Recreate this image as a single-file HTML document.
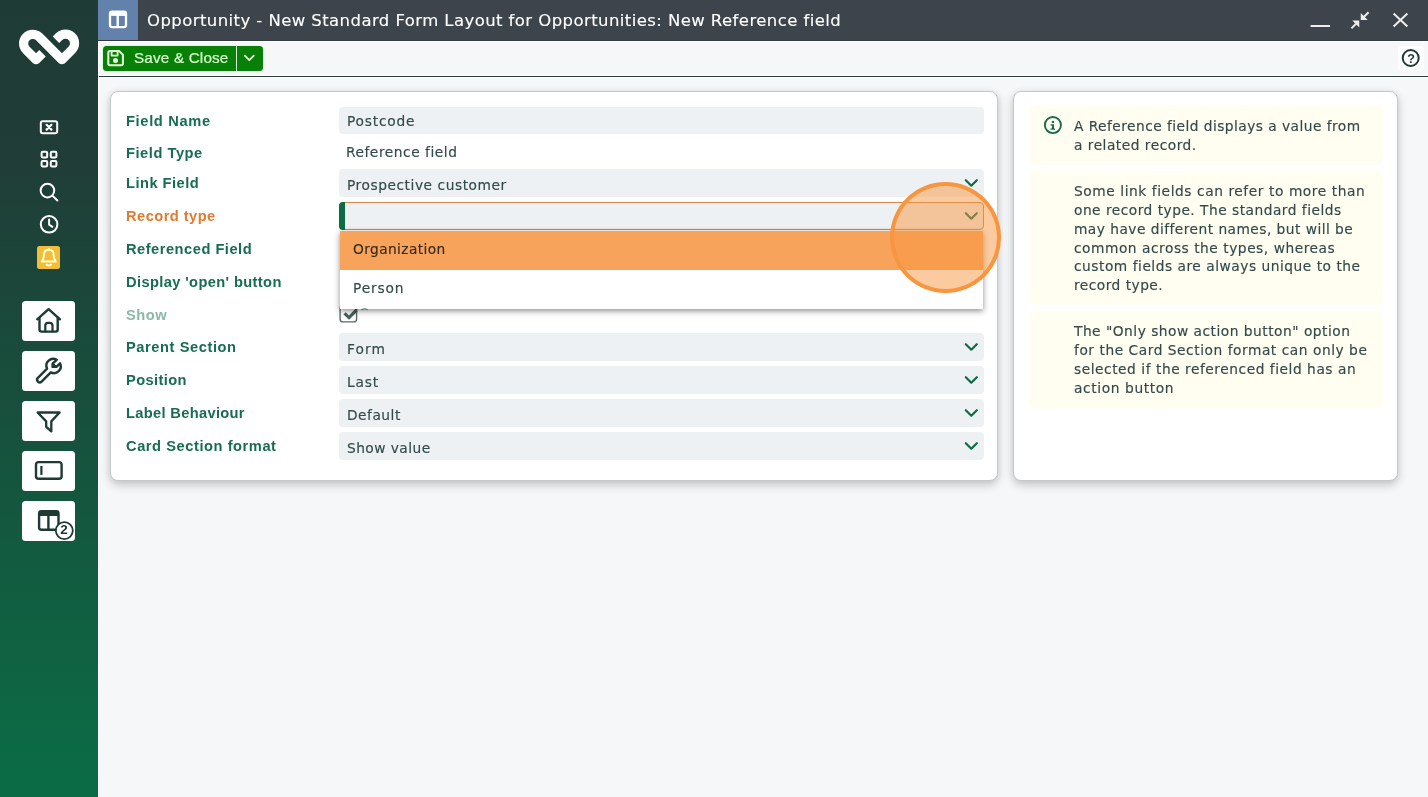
<!DOCTYPE html>
<html lang="en">
<head>
<meta charset="utf-8">
<title>Opportunity - New Standard Form Layout for Opportunities: New Reference field</title>
<style>
*{box-sizing:border-box;margin:0;padding:0}
html,body{width:1428px;height:797px;overflow:hidden;background:#f5f7f9}
#edge{position:absolute;left:98px;top:41px;width:1px;height:756px;background:#fff}
body{font-family:"DejaVu Sans","Liberation Sans",sans-serif;font-size:13.7px;color:#324b4a;position:relative}
.t{position:absolute;white-space:pre;line-height:20px;height:20px;will-change:transform}
.ttl{font-weight:normal;font-size:16px;color:#fff;line-height:24px;height:24px;transform:scaleX(1.03);transform-origin:0 0;-webkit-text-stroke:.12px}
.sv{font-family:"Liberation Sans",sans-serif;font-size:15px;color:#dcffd0;transform:scaleX(1.02);transform-origin:0 0;-webkit-text-stroke:.2px}
.abs{position:absolute}
svg{display:block;position:absolute;overflow:visible}

/* sidebar */
#side{position:absolute;left:0;top:0;width:98px;height:797px;background:linear-gradient(180deg,#1f3b35 0%,#1f3e37 22%,#0b6b45 97%,#0b6b45 100%)}
#badge{will-change:transform;position:absolute;left:54.1px;top:521.3px;width:20px;height:18px;line-height:18px;text-align:center;font-family:"Liberation Sans",sans-serif;font-weight:bold;font-size:13.5px;letter-spacing:0;color:#1d3a35}

/* title bar */
#title{position:absolute;left:98px;top:0;width:1330px;height:41px;background:#3e444b;border-bottom:1px solid #353b42}
#tab{position:absolute;left:0;top:0;width:40px;height:40px;background:#6282ab}

/* toolbar */
#bar{position:absolute;left:98px;top:41px;width:1330px;height:37px;background:#f5f7f9;border-top:1px solid #fff;border-bottom:1px solid #fff}
#bar:after{content:"";position:absolute;left:0;top:33px;width:1330px;height:1px;background:#fff;border-bottom:1px solid #2c3a38}
#save{position:absolute;left:5px;top:4px;box-shadow:0 0 0 1px #ddf9dd;width:133px;height:25px;background:#088008;border-radius:3.5px 0 0 3.5px;color:#d6ffc6;font-family:"Liberation Sans",sans-serif;font-size:15.5px;letter-spacing:0;line-height:25px;white-space:nowrap}
#savedd{position:absolute;left:139px;top:4px;box-shadow:0 0 0 1px #ddf9dd;width:26px;height:25px;background:#088008;border-radius:0 3.5px 3.5px 0}
#q{will-change:transform;position:absolute;left:1302.7px;top:7px;width:20px;height:20px;line-height:20px;text-align:center;font-family:"Liberation Sans",sans-serif;font-weight:bold;font-size:12.5px;letter-spacing:0;color:#1d3a35}
#help{position:absolute;left:1300px;top:4px;width:26px;height:25px;background:#fff;border-radius:4px}

/* cards */
.card{position:absolute;background:#fff;border:1px solid #c6c8ca;border-radius:8px;box-shadow:0 4px 10px rgba(0,0,0,.2),0 0 6px rgba(0,0,0,.05)}
#c1{left:110px;top:91px;width:888px;height:390px}
#c2{left:1013px;top:91px;width:385px;height:390px}

.lbl{font-family:"Liberation Sans",sans-serif;font-weight:bold;font-size:14.1px;color:#176d4f;transform:scaleX(1.04);transform-origin:0 0}
.inp{position:absolute;left:339px;width:645px;height:27px;background:#eef1f4;border-radius:4px}
.val{font-size:13.3px;transform:scaleX(1.035);transform-origin:0 0;-webkit-text-stroke:.15px}
.chev{left:964px;width:14px;height:8px}

/* dropdown */
#rt{position:absolute;left:339px;top:202px;width:645px;height:28px;background:#eef1f4;border:1px solid #cf8a4c;border-radius:4px;box-shadow:inset 0 0 0 1px #fbeadb}
#rt i{position:absolute;left:-1px;top:-1px;width:6px;height:28px;background:#0d6b45;border-radius:4px 0 0 4px}
#dd{position:absolute;left:340px;top:231px;width:643px;height:78px;background:#fff;box-shadow:0 2px 6px rgba(0,0,0,.45)}
#dd .o{position:absolute;left:0;width:643px}
#dd .o1{top:0;height:38.6px;background:#f8a35c}
#dd .o2{top:38.6px;height:39.4px}
#ring{position:absolute;left:890.2px;top:182.2px;width:110.8px;height:110.6px;border-radius:50%;border:4px solid #f8963f;background:rgba(248,150,64,.5)}

/* notes */
.note{position:absolute;left:1030px;width:351.5px;background:#fffef1;border-radius:5px;box-shadow:0 0 2px 1px #fffef1}
</style>
</head>
<body>

<nav id="side">
  <svg style="left:0;top:0" width="98" height="797" viewBox="0 0 98 797" fill="none" stroke-linecap="round" stroke-linejoin="round">
    <!-- logo -->
    <path d="M42.49 52.49 L36.12 58.85 L26.34 49.06 A9 9 0 0 1 39.06 36.34 L61.58 58.85 L71.56 48.86 A9 9 0 0 0 58.84 36.14 L55.7 39.3" stroke="#fff" stroke-width="9" stroke-linecap="butt" transform="translate(49.05 46.9) scale(1.018) translate(-48.9 -46.3)"/>
    <!-- close window -->
    <g stroke="#fff" stroke-width="2">
      <rect x="40.8" y="121.2" width="16.4" height="12" rx="2"/>
      <path d="M46.6 124.8 L51.4 129.6 M51.4 124.8 L46.6 129.6" stroke-width="2.2"/>
      <!-- grid -->
      <rect x="41.6" y="151.8" width="5.6" height="5.6" rx="1.2"/>
      <rect x="50.8" y="151.8" width="5.6" height="5.6" rx="1.2"/>
      <rect x="41.6" y="160.9" width="5.6" height="5.6" rx="1.2"/>
      <rect x="50.8" y="160.9" width="5.6" height="5.6" rx="1.2"/>
      <!-- search -->
      <circle cx="47.45" cy="190.6" r="6.8"/>
      <path d="M52.4 195.6 L57.4 200.5"/>
      <!-- clock -->
      <circle cx="49.1" cy="224.3" r="8.3"/>
      <path d="M49.1 219.6 L49.1 224.6 L52.4 226.8"/>
    </g>
    <!-- bell -->
    <rect x="37" y="246" width="23" height="23" rx="2.5" fill="#f3bd37"/>
    <g stroke="#ffffd0" stroke-width="2">
      <path d="M48.8 248.9 L48.8 249.8 M48.8 249.8 C45.4 249.8 43.9 252.4 43.9 255.2 C43.9 258.6 43 260.2 41.8 261.6 L55.8 261.6 C54.6 260.2 53.7 258.6 53.7 255.2 C53.7 252.4 52.2 249.8 48.8 249.8 Z"/>
      <path d="M46.6 264.6 Q48.8 266.2 51 264.6"/>
    </g>
    <!-- nav buttons -->
    <g fill="#fff">
      <rect x="22" y="301" width="53" height="40" rx="3.5"/>
      <rect x="22" y="351" width="53" height="40" rx="3.5"/>
      <rect x="22" y="401" width="53" height="40" rx="3.5"/>
      <rect x="22" y="451" width="53" height="40" rx="3.5"/>
      <rect x="22" y="501" width="53" height="40" rx="3.5"/>
    </g>
    <g stroke="#1d3a35" stroke-width="2.4">
      <!-- home -->
      <path d="M37.2 319.3 L48.6 309.2 L60 319.3"/>
      <path d="M39.5 318 L39.5 329.6 Q39.5 331.6 41.5 331.6 L55.7 331.6 Q57.7 331.6 57.7 329.6 L57.7 318"/>
      <path d="M45.3 331.4 L45.3 325.6 Q45.3 322.9 48 322.9 L49.8 322.9 Q52.5 322.9 52.5 325.6 L52.5 331.4" stroke-width="2.2"/>
      <!-- wrench -->
      <path d="M56.7 359.9 A6.8 6.8 0 0 0 47.1 368.7 L37.9 377.9 A2.55 2.55 0 0 0 41.6 381.6 L50.8 372.4 A6.8 6.8 0 0 0 60 363.3 L56.4 366.9 L52.6 366.9 L52.6 363.6 Z"/>
      <path d="M52.6 363.2 L52.6 366.9 L56.6 366.9 Z" fill="#1d3a35" stroke-width="1"/>
      <!-- filter -->
      <path d="M37.6 412.5 L59.6 412.5 L51.3 421.4 L51.3 431.4 L46.2 426.8 L46.2 421.4 Z" stroke-width="2.3"/>
      <!-- input -->
      <rect x="36" y="462.1" width="25.6" height="16.7" rx="2.6"/>
      <path d="M41.4 466 L41.4 474.9" stroke-width="2.2" stroke-linecap="butt"/>
      <!-- table columns -->
      <rect x="39.1" y="511.1" width="19.4" height="18.6" rx="2.2"/>
      <path d="M39.1 513.8 L58.5 513.8" stroke-width="4.4" stroke-linecap="butt"/>
      <path d="M48.4 515 L48.4 529.6" stroke-linecap="butt"/>
      <circle cx="64.3" cy="530.6" r="8.5" fill="#fff" stroke-width="1.8"/>
    </g>
  </svg>
  <div id="badge">2</div>
</nav>

<div id="title">
  <div id="tab"></div>
  <svg style="left:0;top:0" width="1330" height="40" viewBox="98 0 1330 40" fill="none" stroke-linecap="round" stroke-linejoin="round">
    <rect x="110" y="11.6" width="16" height="15.5" rx="2" stroke="#fff" stroke-width="2.3"/>
    <path d="M110 13.6 L126 13.6" stroke="#fff" stroke-width="4.6" stroke-linecap="butt"/>
    <path d="M117.7 15 L117.7 27" stroke="#fff" stroke-width="2.4" stroke-linecap="butt"/>
    <g stroke="#ececec" stroke-width="2" stroke-linecap="butt">
      <path d="M1310.6 26 L1330 26"/>
      <path d="M1393.6 13.6 L1407.4 26.6 M1407.4 13.6 L1393.6 26.6"/>
      <path d="M1368.6 12.2 L1362 18.8"/>
      <path d="M1361.5 14.9 L1361.5 19.3 L1365.9 19.3 Z" fill="#ececec" stroke-width="1.5" stroke-linejoin="miter"/>
      <path d="M1351.4 28.4 L1358 21.8"/>
      <path d="M1354.1 21.3 L1358.5 21.3 L1358.5 25.7 Z" fill="#ececec" stroke-width="1.5" stroke-linejoin="miter"/>
    </g>
  </svg>
</div>

<div id="bar">
  <div id="save"></div>
  <div id="savedd"></div>
  <div id="help"></div>
  <svg style="left:0;top:0" width="1330" height="35" viewBox="98 42 1330 35" fill="none" stroke-linecap="round" stroke-linejoin="round">
    <g stroke="#e6ffda" stroke-width="2">
      <path d="M108.3 52.6 Q108.3 50.9 110 50.9 L119 50.9 L122.9 54.8 L122.9 63.6 Q122.9 65.3 121.2 65.3 L110 65.3 Q108.3 65.3 108.3 63.6 Z"/>
      <path d="M111.6 51.4 L111.6 55.6 L117.6 55.6 L117.6 51.4" stroke-width="1.8"/>
      <circle cx="115.5" cy="60.6" r="1.5" fill="#e6ffda"/>
      <path d="M244.8 55.7 L249.3 60.2 L253.8 55.7" stroke-width="1.8"/>
    </g>
    <circle cx="1410.7" cy="58" r="8" stroke="#1d3a35" stroke-width="2"/>
  </svg>
  <div id="q">?</div>
</div>

<h1 class="t ttl" style="left:147.3px;top:9px;letter-spacing:0.42px">Opportunity - New Standard Form Layout for Opportunities: New Reference field</h1>
<span class="t sv" style="left:134.0px;top:48px;letter-spacing:0.15px">Save &amp; Close</span>
<div id="edge"></div>
<div class="card" id="c1"></div>
<div class="card" id="c2"></div>
<label class="t lbl" style="left:125.6px;top:111px;letter-spacing:0.63px">Field Name</label>
<label class="t lbl" style="left:125.6px;top:143px;letter-spacing:0.52px">Field Type</label>
<label class="t lbl" style="left:125.6px;top:173px;letter-spacing:0.46px">Link Field</label>
<label class="t lbl" style="left:125.6px;top:206px;letter-spacing:0.43px;color:#e07b30">Record type</label>
<label class="t lbl" style="left:125.6px;top:239px;letter-spacing:0.48px">Referenced Field</label>
<label class="t lbl" style="left:125.6px;top:272px;letter-spacing:0.36px">Display 'open' button</label>
<label class="t lbl" style="left:125.6px;top:305px;letter-spacing:0.54px;color:#8bb8a6">Show</label>
<label class="t lbl" style="left:125.6px;top:337px;letter-spacing:0.55px">Parent Section</label>
<label class="t lbl" style="left:125.6px;top:370px;letter-spacing:0.36px">Position</label>
<label class="t lbl" style="left:125.6px;top:403px;letter-spacing:0.31px">Label Behaviour</label>
<label class="t lbl" style="left:125.6px;top:436px;letter-spacing:0.53px">Card Section format</label>


<div class="inp" style="top:107px"></div>
<div class="inp" style="top:169px;height:28px"></div>

<div class="inp" style="top:333px;height:28px"></div>
<div class="inp" style="top:366px;height:28px"></div>
<div class="inp" style="top:399px;height:28px"></div>
<div class="inp" style="top:432px;height:28px"></div>
<div class="t val" style="left:347.3px;top:112px;letter-spacing:0.75px">Postcode</div>
<div class="t val" style="left:346.2px;top:143px;letter-spacing:0.52px">Reference field</div>
<div class="t val" style="left:347.3px;top:176px;letter-spacing:0.53px">Prospective customer</div>
<div class="t val" style="left:347.3px;top:340px;letter-spacing:1.08px">Form</div>
<div class="t val" style="left:347.3px;top:373px;letter-spacing:0.8px">Last</div>
<div class="t val" style="left:347.3px;top:406px;letter-spacing:0.49px">Default</div>
<div class="t val" style="left:347.3px;top:439px;letter-spacing:0.43px">Show value</div>

<svg style="left:0;top:0" width="1428" height="797" viewBox="0 0 1428 797" fill="none" stroke-linecap="round" stroke-linejoin="round">
  <rect x="340.1" y="305.4" width="16.5" height="16.5" rx="3" stroke="#5c6a68" stroke-width="1.4"/>
  <path d="M344.6 313.4 L349 317.6 L356.6 310" stroke="#46625c" stroke-width="3.2" stroke-linecap="butt" stroke-linejoin="miter"/>
  <g stroke="#0d6b45" stroke-width="2.2">
    <path d="M965.8 180.2 L971.3 185.7 L976.8 180.2"/>
    <path d="M965.8 344.2 L971.3 349.7 L976.8 344.2"/>
    <path d="M965.8 377.2 L971.3 382.7 L976.8 377.2"/>
    <path d="M965.8 410.2 L971.3 415.7 L976.8 410.2"/>
    <path d="M965.8 443.2 L971.3 448.7 L976.8 443.2"/>
  </g>
</svg>
<div id="rt"><i></i></div>
<svg style="left:0;top:0" width="1428" height="797" viewBox="0 0 1428 797" fill="none" stroke-linecap="round" stroke-linejoin="round">
  <path d="M965.8 213.2 L971.3 218.7 L976.8 213.2" stroke="#0d6b45" stroke-width="2.2"/>
</svg>
<div id="dd">
  <div class="o o1"></div>
  <div class="o o2"></div>
</div>
<div class="t val" style="left:353.2px;top:240px;letter-spacing:0.38px;color:#3a2a1b">Organization</div>
<div class="t val" style="left:353.2px;top:279px;letter-spacing:0.81px">Person</div>
<svg style="left:355px;top:300px" width="20" height="20" viewBox="355 300 20 20" fill="none"><path d="M361.6 309.6 Q364.5 308.3 367.4 309.6" stroke="#5f8278" stroke-width="1.3" stroke-linecap="round"/></svg>

<div class="note" style="top:106px;height:57.5px"></div>
<p class="t val" style="left:1073.7px;top:117px;letter-spacing:0.44px">A Reference field displays a value from</p>
<p class="t val" style="left:1073.7px;top:136px;letter-spacing:0.48px">a related record.</p>
<div class="note" style="top:171.5px;height:132.5px"></div>
<p class="t val" style="left:1073.7px;top:182px;letter-spacing:0.55px">Some link fields can refer to more than</p>
<p class="t val" style="left:1073.7px;top:201px;letter-spacing:0.47px">one record type. The standard fields</p>
<p class="t val" style="left:1073.7px;top:220px;letter-spacing:0.45px">may have different names, but will be</p>
<p class="t val" style="left:1073.7px;top:239px;letter-spacing:0.51px">common across the types, whereas</p>
<p class="t val" style="left:1073.7px;top:257px;letter-spacing:0.5px">custom fields are always unique to the</p>
<p class="t val" style="left:1073.7px;top:276px;letter-spacing:0.46px">record type.</p>
<div class="note" style="top:312px;height:95px"></div>
<p class="t val" style="left:1073.7px;top:322px;letter-spacing:0.48px">The "Only show action button" option</p>
<p class="t val" style="left:1073.7px;top:341px;letter-spacing:0.52px">for the Card Section format can only be</p>
<p class="t val" style="left:1073.7px;top:360px;letter-spacing:0.52px">selected if the referenced field has an</p>
<p class="t val" style="left:1073.7px;top:379px;letter-spacing:0.6px">action button</p>

<svg style="left:1038px;top:110px" width="30" height="30" viewBox="1038 110 30 30" fill="none">
  <circle cx="1052.9" cy="125.05" r="8.05" stroke="#156b4c" stroke-width="1.9"/>
  <rect x="1051.8" y="120.9" width="2.2" height="2.1" fill="#156b4c"/>
  <path d="M1050.5 124.3 L1054 124.3 L1054 128.4 L1055.1 128.4 L1055.1 129.7 L1050.5 129.7 L1050.5 128.4 L1051.9 128.4 L1051.9 125.6 L1050.5 125.6 Z" fill="#156b4c"/>
</svg>
<div id="ring"></div>

</body>
</html>
